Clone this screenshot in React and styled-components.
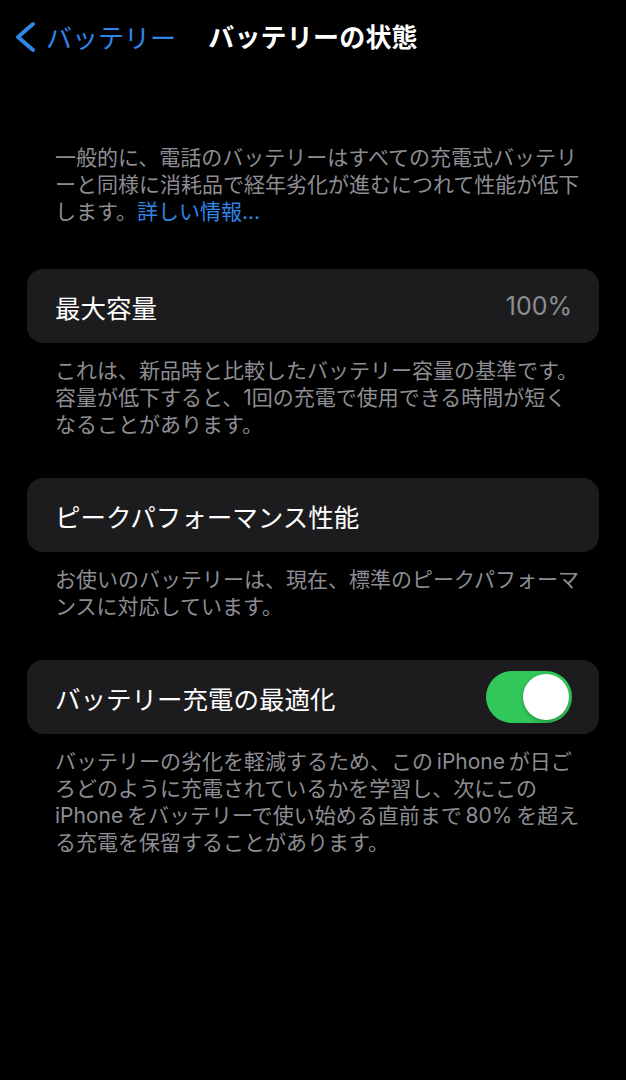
import React from "react";
import styled, { createGlobalStyle } from "styled-components";

const GlobalStyle = createGlobalStyle`
  html, body {
    margin: 0;
    padding: 0;
    background: #000;
  }
  body {
    font-family: Inter, "Noto Sans CJK JP", sans-serif;
    -webkit-font-smoothing: antialiased;
  }
`;

const Screen = styled.div`
  width: 626px;
  min-height: 1080px;
  background: #000;
  color: #fff;
`;

const NavBar = styled.header`
  display: grid;
  grid-template-columns: 1fr auto 1fr;
  align-items: center;
  height: 71px;
`;

const BackButton = styled.button`
  display: flex;
  align-items: center;
  gap: 10px;
  padding: 2px 0 0 14px;
  border: 0;
  background: none;
  color: #2f86e8;
  font-family: inherit;
  font-size: 26px;
  cursor: pointer;
  justify-self: start;
`;

const Title = styled.h1`
  margin: 0;
  font-size: 26px;
  font-weight: 600;
  color: #fff;
  letter-spacing: 0.2px;
`;

const Content = styled.main`
  padding: 73px 27px 0;
`;

const Note = styled.p`
  margin: 0;
  padding: ${(p) => (p.$intro ? "0 28px" : "14px 28px 0")};
  margin-bottom: ${(p) => (p.$intro ? "44px" : "40px")};
  font-size: 21px;
  line-height: 27px;
  color: #8d8d93;
  white-space: nowrap;
`;

const Link = styled.a`
  color: #2f86e8;
  text-decoration: none;
`;

const Card = styled.div`
  display: flex;
  align-items: center;
  justify-content: space-between;
  height: 74px;
  padding: 0 27px 0 28px;
  border-radius: 16px;
  background: #1c1c1e;
`;

const Label = styled.span`
  font-size: 25.5px;
  color: #fff;
`;

const Value = styled.span`
  font-size: 25px;
  color: #8d8d93;
`;

const Toggle = styled.span`
  position: relative;
  display: inline-block;
  width: 86px;
  height: 52px;
  border-radius: 26px;
  background: ${(p) => (p.$on ? "#32c75a" : "#39393d")};

  &::after {
    content: "";
    position: absolute;
    top: 3px;
    left: ${(p) => (p.$on ? "37px" : "3px")};
    width: 46px;
    height: 46px;
    border-radius: 50%;
    background: #fff;
    box-shadow: 0 2px 4px rgba(0, 0, 0, 0.25);
  }
`;

const Chevron = () => (
  <svg width="22" height="32" viewBox="0 0 22 32" aria-hidden="true">
    <polyline
      points="19,3 4,16 19,29"
      fill="none"
      stroke="#2f86e8"
      strokeWidth="4"
      strokeLinecap="round"
      strokeLinejoin="round"
    />
  </svg>
);

export default function App() {
  return (
    <>
      <GlobalStyle />
      <Screen>
        <NavBar>
          <BackButton>
            <Chevron />
            バッテリー
          </BackButton>
          <Title>バッテリーの状態</Title>
          <span />
        </NavBar>
        <Content>
          <Note $intro>
            一般的に、電話のバッテリーはすべての充電式バッテリ
            <br />
            ーと同様に消耗品で経年劣化が進むにつれて性能が低下
            <br />
            します。<Link href="#">詳しい情報...</Link>
          </Note>

          <Card>
            <Label>最大容量</Label>
            <Value>100%</Value>
          </Card>
          <Note>
            これは、新品時と比較したバッテリー容量の基準です。
            <br />
            容量が低下すると、1回の充電で使用できる時間が短く
            <br />
            なることがあります。
          </Note>

          <Card>
            <Label>ピークパフォーマンス性能</Label>
          </Card>
          <Note>
            お使いのバッテリーは、現在、標準のピークパフォーマ
            <br />
            ンスに対応しています。
          </Note>

          <Card>
            <Label>バッテリー充電の最適化</Label>
            <Toggle $on />
          </Card>
          <Note>
            バッテリーの劣化を軽減するため、この{"\u2009"}iPhone{"\u2009"}が日ご
            <br />
            ろどのように充電されているかを学習し、次にこの
            <br />
            iPhone{"\u2009"}をバッテリーで使い始める直前まで{"\u2009"}80%{"\u2009"}を超え
            <br />
            る充電を保留することがあります。
          </Note>
        </Content>
      </Screen>
    </>
  );
}
